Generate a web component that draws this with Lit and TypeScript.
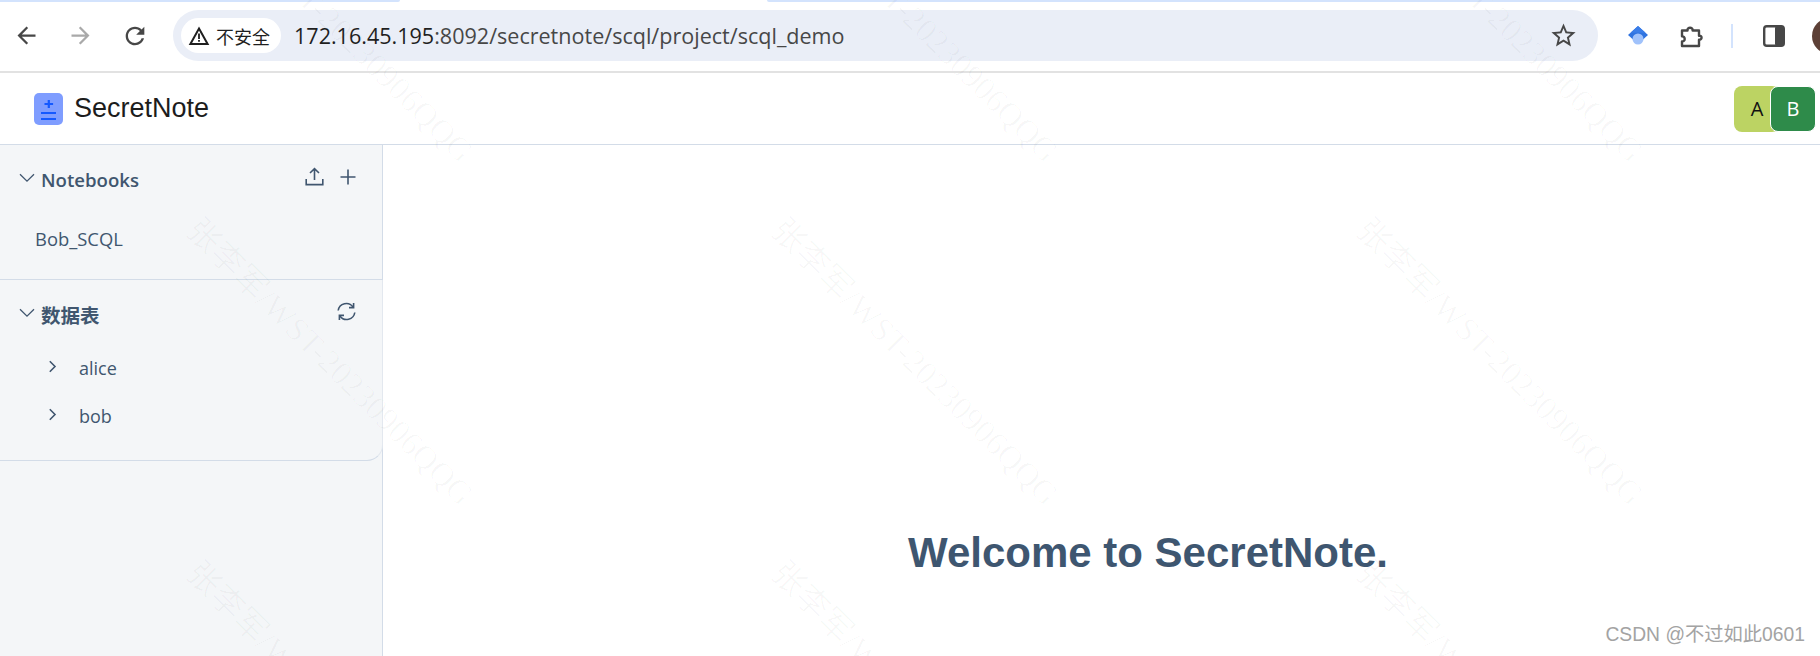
import { LitElement, html, css } from 'lit';
import { customElement } from 'lit/decorators.js';

const arrowBack = 'M20 11H7.83l5.59-5.59L12 4l-8 8 8 8 1.41-1.41L7.83 13H20v-2z';
const arrowForward = 'M4 11h12.17l-5.59-5.59L12 4l8 8-8 8-1.41-1.41L16.17 13H4v-2z';
const reload = 'M17.65 6.35C16.2 4.9 14.21 4 12 4c-4.42 0-7.99 3.58-7.99 8s3.57 8 7.99 8c3.73 0 6.84-2.55 7.73-6h-2.08c-.82 2.33-3.04 4-5.65 4-3.31 0-6-2.69-6-6s2.69-6 6-6c1.66 0 3.14.69 4.22 1.78L13 11h7V4l-2.35 2.35z';
const star = 'M22 9.24l-7.19-.62L12 2 9.19 8.63 2 9.24l5.46 4.73L5.82 21 12 17.27 18.18 21l-1.63-7.03L22 9.24zM12 15.4l-3.76 2.27 1-4.28-3.32-2.88 4.38-.38L12 6.1l1.71 4.04 4.38.38-3.32 2.88 1 4.28L12 15.4z';

const icon = (d: string, size = 24) => html`<svg width=${size} height=${size} viewBox="0 0 24 24" fill="currentColor"><path d=${d}></path></svg>`;

const chevronDown = html`<svg class="chev" width="16" height="10" viewBox="0 0 16 10" fill="none" stroke="currentColor" stroke-width="1.3"><path d="M1 1.2l7 7 7-7"></path></svg>`;
const chevronRight = html`<svg class="chev-r" width="9" height="13" viewBox="0 0 9 13" fill="none" stroke="currentColor" stroke-width="1.6"><path d="M1.8 1.2l5.2 5.3-5.2 5.3"></path></svg>`;

const watermarks = Array.from({ length: 9 });

@customElement('app-root')
export class AppRoot extends LitElement {
  static styles = css`
    :host {
      display: block;
      position: relative;
      width: 1820px;
      height: 656px;
      overflow: hidden;
      background: #fff;
      font-family: "Open Sans", "Noto Sans CJK SC", sans-serif;
    }

    .strip {
      display: flex;
      height: 2px;
      justify-content: space-between;
    }
    .strip i {
      display: block;
      background: #d3e3fd;
      width: 400px;
      border-bottom-right-radius: 2px;
    }
    .strip i + i {
      width: 1053px;
      border-bottom-right-radius: 0;
      border-bottom-left-radius: 2px;
    }

    .toolbar {
      display: flex;
      align-items: center;
      height: 69px;
      padding: 0 0 0 13px;
      border-bottom: 2px solid #e2e2e2;
      color: #474747;
      position: relative;
    }
    .toolbar svg { display: block; flex: none; }
    .nav {
      display: flex;
      align-items: center;
      gap: 27px;
      margin-top: -2px;
      flex: none;
    }
    .nav .off { color: #a9a9a9; }

    .omnibox {
      display: flex;
      align-items: center;
      flex: none;
      width: 1425px;
      height: 51px;
      margin: -2px 0 0 24px;
      padding: 0 20px 0 8px;
      box-sizing: border-box;
      border-radius: 26px;
      background: #eaeef7;
    }
    .chip {
      display: flex;
      align-items: center;
      gap: 6px;
      height: 35px;
      padding: 0 11px 0 7px;
      border-radius: 18px;
      background: #fff;
      color: #1f1f1f;
      font-size: 18px;
    }
    .url {
      flex: 1;
      margin-left: 13px;
      font-size: 21.55px;
      color: #474747;
    }
    .url b { font-weight: 400; color: #1f1f1f; }

    .actions {
      display: flex;
      align-items: center;
      margin: -2px 0 0 29px;
      flex: none;
    }
    .puzzle { margin-left: 30px; }
    .sep { width: 2px; height: 24px; background: #d3e3fd; margin: 0 30px 0 26px; }
    .face {
      width: 36px;
      height: 36px;
      border-radius: 50%;
      background: #5d4037;
      margin-left: 27px;
      flex: none;
    }

    .header {
      display: flex;
      align-items: center;
      justify-content: space-between;
      height: 71px;
      padding: 0 4px 0 34px;
      border-bottom: 1px solid #d3dce8;
    }
    .brand {
      display: flex;
      align-items: center;
      gap: 11px;
      font-family: "Liberation Sans", sans-serif;
      font-size: 27px;
      color: #1c1c1c;
    }
    .brand svg { display: block; }
    .users { display: flex; }
    .user {
      width: 46px;
      height: 46px;
      box-sizing: border-box;
      border-radius: 8px;
      display: flex;
      align-items: center;
      justify-content: center;
      font-size: 20px;
      background: #bcd363;
      color: #111;
    }
    .user.b {
      margin-left: -10px;
      background: #2e8b4a;
      color: #fff;
      border: 1px solid #fff;
    }

    .body {
      display: flex;
      height: 511px;
    }
    .sidebar {
      width: 383px;
      flex: none;
      box-sizing: border-box;
      background: #f4f6f8;
      border-right: 1px solid #d3dce8;
      color: #40566f;
    }
    .section-notebooks {
      height: 135px;
      box-sizing: border-box;
      border-bottom: 1px solid #d3dce8;
    }
    .section-tables {
      height: 181px;
      box-sizing: border-box;
      border-bottom: 1px solid #d3dce8;
      border-bottom-right-radius: 16px;
      border-right: 1px solid #e3e8ef;
      margin-right: -1px;
    }
    .head {
      display: flex;
      align-items: center;
      height: 60px;
      box-sizing: border-box;
      padding: 9px 26px 0 19px;
      font-size: 18.6px;
      font-weight: 600;
    }
    .head .chev { margin-right: 6px; margin-top: -3px; }
    .head .title { flex: 1; }
    .head .title.cn { font-size: 19.5px; }
    .head .tools {
      display: flex;
      gap: 16px;
      margin-top: -6px;
      align-items: center;
    }
    .head svg { display: block; }
    .notebook {
      padding: 16px 0 0 35px;
      font-size: 18.4px;
      line-height: 36px;
    }
    .section-tables .head { height: 64px; padding-top: 4px; }
    .tree {
      display: flex;
      align-items: center;
      gap: 22px;
      height: 48px;
      padding-left: 48px;
      font-size: 18px;
    }
    .tree .chev-r { margin-top: -3px; }

    .main {
      flex: 1;
      padding: 384px 0 0 525px;
    }
    .main h1 {
      margin: 0;
      font-family: "Liberation Sans", sans-serif;
      font-size: 42px;
      line-height: 48px;
      font-weight: 700;
      color: #3e5670;
    }

    .csdn {
      position: absolute;
      right: 15px;
      bottom: 9px;
      font-family: "Liberation Sans", "Noto Sans CJK SC", sans-serif;
      font-size: 19.3px;
      color: #a3a3a3;
    }

    .marks {
      position: absolute;
      top: -155px;
      left: 40px;
      display: grid;
      grid-template-columns: repeat(3, 585px);
      grid-auto-rows: 343px;
      pointer-events: none;
    }
    .marks span {
      display: flex;
      align-items: center;
      justify-content: center;
      white-space: nowrap;
      transform: rotate(45deg);
      font-family: "Liberation Serif", "Noto Sans CJK SC", serif;
      font-size: 33px;
      color: rgba(0, 0, 0, 0.026);
    }
  `;

  render() {
    return html`
      <div class="strip"><i></i><i></i></div>
      <div class="toolbar">
        <div class="nav">
          ${icon(arrowBack, 27)}
          <span class="off">${icon(arrowForward, 27)}</span>
          ${icon(reload, 28)}
        </div>
        <div class="omnibox">
          <div class="chip">
            <svg width="22" height="20" viewBox="0 0 22 20">
              <path d="M11 2.6L19.6 18H2.4z" fill="none" stroke="#1f1f1f" stroke-width="2" stroke-linejoin="miter"></path>
              <path d="M10.1 7.5h1.8v5.5h-1.8zM10.1 14h1.8v1.8h-1.8z" fill="#1f1f1f"></path>
            </svg>
            <span>不安全</span>
          </div>
          <div class="url"><b>172.16.45.195</b>:8092/secretnote/scql/project/scql_demo</div>
          ${icon(star, 29)}
        </div>
        <div class="actions">
          <svg width="22" height="22" viewBox="0 0 22 22">
            <path d="M11 1l10 9-10 9L1 10z" fill="#2f73e0"></path>
            <path d="M11 1l7.5 6.8H3.5z" fill="#3a7de8"></path>
            <circle cx="11" cy="14" r="5.5" fill="#a0c2fb"></circle>
          </svg>
          <svg class="puzzle" width="26" height="26" viewBox="0 0 26 26" fill="none" stroke="#474747" stroke-width="2.4" stroke-linejoin="round">
            <path d="M3 7.5h5.5c-.4-3.6 5.5-3.6 5.1 0H20v5.2c3.4-.3 3.4 4.2 0 4v6.3H3v-4.6c3.6.4 3.6-5.4 0-5z"></path>
          </svg>
          <div class="sep"></div>
          <svg width="22" height="22" viewBox="0 0 22 22">
            <rect x="1.2" y="1.2" width="19.6" height="19.6" rx="2.6" fill="none" stroke="#474747" stroke-width="2.4"></rect>
            <rect x="12" y="1" width="9" height="20" rx="2" fill="#474747"></rect>
          </svg>
          <div class="face"></div>
        </div>
      </div>

      <div class="header">
        <div class="brand">
          <svg width="29" height="32" viewBox="0 0 29 32">
            <rect width="29" height="32" rx="5" fill="#7f9dff"></rect>
            <path d="M14.8 7v8M10.5 11h8.6" stroke="#1559ff" stroke-width="2.2" fill="none"></path>
            <path d="M7 20h15M7 26h15" stroke="#1559ff" stroke-width="2.2" fill="none"></path>
          </svg>
          <span>SecretNote</span>
        </div>
        <div class="users">
          <div class="user">A</div>
          <div class="user b">B</div>
        </div>
      </div>

      <div class="body">
        <div class="sidebar">
          <div class="section-notebooks">
            <div class="head">
              ${chevronDown}
              <span class="title">Notebooks</span>
              <span class="tools">
                <svg width="19" height="19" viewBox="0 0 19 19" fill="none" stroke="currentColor" stroke-width="1.6">
                  <path d="M9.5 13V1.8M5 6l4.5-4.4L14 6M1.2 12v5.6h16.6V12"></path>
                </svg>
                <svg width="16" height="16" viewBox="0 0 16 16" fill="none" stroke="currentColor" stroke-width="1.6">
                  <path d="M8 .5v15M.5 8h15"></path>
                </svg>
              </span>
            </div>
            <div class="notebook">Bob_SCQL</div>
          </div>
          <div class="section-tables">
            <div class="head">
              ${chevronDown}
              <span class="title cn">数据表</span>
              <span class="tools">
                <svg width="19" height="19" viewBox="0 0 19 19" fill="none" stroke="currentColor" stroke-width="1.6">
                  <path d="M1.2 8.5A8.2 8.2 0 0 1 16 5M17.8 10.5A8.2 8.2 0 0 1 3 14"></path>
                  <path d="M16.6 1v4.6H12M2.4 18v-4.6H7"></path>
                </svg>
              </span>
            </div>
            <div class="tree">${chevronRight}<span>alice</span></div>
            <div class="tree">${chevronRight}<span>bob</span></div>
          </div>
        </div>
        <div class="main"><h1>Welcome to SecretNote.</h1></div>
      </div>

      <div class="marks">
        ${watermarks.map(() => html`<span>张李军/WST-20230906QQG</span>`)}
      </div>
      <div class="csdn">CSDN @不过如此0601</div>
    `;
  }
}
